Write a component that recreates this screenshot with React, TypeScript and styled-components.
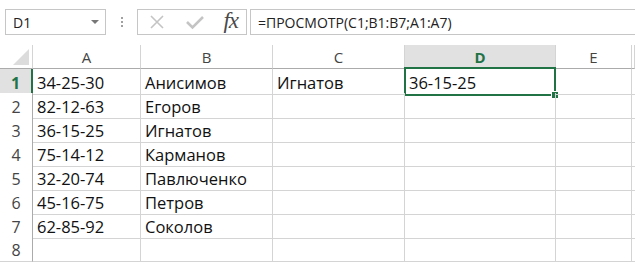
import React from 'react';
import styled, { createGlobalStyle } from 'styled-components';

const GREEN = '#217346';
const GRID = '#d4d4d4';

const GlobalStyle = createGlobalStyle`
  html, body { margin: 0; padding: 0; background: #fff; }
  body { font-family: "Open Sans", "Liberation Sans", sans-serif; }
`;

const Page = styled.div`
  width: 635px;
  height: 264px;
  overflow: hidden;
  background: #fff;
`;

const Toolbar = styled.div`
  display: flex;
  align-items: center;
  padding: 9px 0 0 5px;
  height: 26px;
  box-sizing: content-box;
  margin-bottom: 10px;
`;

const NameBox = styled.div`
  width: 101px;
  height: 26px;
  box-sizing: border-box;
  border: 1px solid #c6c6c6;
  display: flex;
  align-items: center;
  justify-content: space-between;
  padding: 0 6px 0 7px;
  font-size: 14px;
  color: #222;
`;

const Caret = styled.span`
  width: 0;
  height: 0;
  border-left: 4px solid transparent;
  border-right: 4px solid transparent;
  border-top: 4px solid #777;
`;

const Dots = styled.div`
  width: 31px;
  display: flex;
  flex-direction: column;
  align-items: center;
  gap: 2px;
  span {
    width: 2px;
    height: 2px;
    background: #a0a0a0;
  }
`;

const ButtonBox = styled.div`
  width: 110px;
  height: 26px;
  box-sizing: border-box;
  border: 1px solid #c6c6c6;
  display: flex;
  align-items: center;
  justify-content: space-between;
  padding: 0 8px 0 10px;
`;

const Fx = styled.span`
  font-family: "Liberation Serif", "DejaVu Serif", serif;
  font-style: italic;
  font-size: 23px;
  color: #4a4a4a;
  letter-spacing: -1px;
  line-height: 1;
  margin-top: -3px;
`;

const FormulaInput = styled.div`
  margin-left: 3px;
  flex: 1;
  height: 26px;
  box-sizing: border-box;
  border: 1px solid #c6c6c6;
  border-right: none;
  display: flex;
  align-items: center;
  padding-left: 7px;
  font-size: 14px;
  color: #222;
  white-space: nowrap;
`;

const Sheet = styled.div`
  display: flex;
  flex-direction: column;
`;

const Row = styled.div`
  display: grid;
  grid-template-columns: 33px 108px 132px 132px 151px 76px 1fr;
  height: 24px;
`;

const HeaderCell = styled.div<{ $active?: boolean }>`
  position: relative;
  box-sizing: border-box;
  border-right: 1px solid ${GRID};
  border-bottom: ${p => (p.$active ? `2px solid ${GREEN}` : '1px solid #ababab')};
  background: ${p => (p.$active ? '#e1e1e1' : '#fff')};
  color: ${p => (p.$active ? GREEN : '#444')};
  font-weight: ${p => (p.$active ? 700 : 400)};
  font-size: 15px;
  display: flex;
  align-items: center;
  justify-content: center;
  padding-top: ${p => (p.$active ? 1 : 0)}px;
`;

const Corner = styled.div`
  position: absolute;
  right: 3px;
  bottom: 3px;
  width: 0;
  height: 0;
  border-left: 16px solid transparent;
  border-bottom: 16px solid #dcdcdc;
`;

const RowHead = styled.div<{ $active?: boolean }>`
  box-sizing: border-box;
  border-right: ${p => (p.$active ? `2px solid ${GREEN}` : '1px solid #ababab')};
  border-bottom: 1px solid ${GRID};
  background: ${p => (p.$active ? '#e1e1e1' : '#fff')};
  color: ${p => (p.$active ? GREEN : '#444')};
  font-weight: ${p => (p.$active ? 700 : 400)};
  font-size: 16px;
  display: flex;
  align-items: center;
  justify-content: center;
  padding-top: 2px;
`;

const Cell = styled.div`
  position: relative;
  box-sizing: border-box;
  border-right: 1px solid ${GRID};
  border-bottom: 1px solid ${GRID};
  font-size: 16.5px;
  color: #111;
  display: flex;
  align-items: center;
  padding: 2px 0 0 4px;
  white-space: nowrap;
`;

const Selection = styled.div`
  position: absolute;
  left: -1px;
  top: -2px;
  right: -1px;
  bottom: -2px;
  border: 2px solid ${GREEN};
  pointer-events: none;
`;

const Handle = styled.div`
  position: absolute;
  right: -5px;
  bottom: -5px;
  width: 6px;
  height: 6px;
  background: ${GREEN};
  border: 1px solid #fff;
`;

const columns = ['A', 'B', 'C', 'D', 'E', ''];

const data: string[][] = [
  ['34-25-30', 'Анисимов', 'Игнатов', '36-15-25'],
  ['82-12-63', 'Егоров'],
  ['36-15-25', 'Игнатов'],
  ['75-14-12', 'Карманов'],
  ['32-20-74', 'Павлюченко'],
  ['45-16-75', 'Петров'],
  ['62-85-92', 'Соколов'],
  [],
];

const XIcon = () => (
  <svg width="18" height="18" viewBox="0 0 18 18">
    <path d="M3 3 L15 15 M15 3 L3 15" stroke="#c4c4c4" strokeWidth="1.6" fill="none" />
  </svg>
);

const CheckIcon = () => (
  <svg width="20" height="18" viewBox="0 0 20 18">
    <path d="M2 9 L7.5 14.5 L18 4" stroke="#c4c4c4" strokeWidth="2.6" fill="none" />
  </svg>
);

export default function App() {
  return (
    <Page>
      <GlobalStyle />
      <Toolbar>
        <NameBox>
          D1
          <Caret />
        </NameBox>
        <Dots>
          <span />
          <span />
          <span />
        </Dots>
        <ButtonBox>
          <XIcon />
          <CheckIcon />
          <Fx>fx</Fx>
        </ButtonBox>
        <FormulaInput>=ПРОСМОТР(C1;B1:B7;A1:A7)</FormulaInput>
      </Toolbar>
      <Sheet>
        <Row>
          <HeaderCell>
            <Corner />
          </HeaderCell>
          {columns.map(c => (
            <HeaderCell key={c || 'F'} $active={c === 'D'}>
              {c}
            </HeaderCell>
          ))}
        </Row>
        {data.map((row, r) => (
          <Row key={r}>
            <RowHead $active={r === 0}>{r + 1}</RowHead>
            {columns.map((c, i) => (
              <Cell key={i}>
                {row[i] || ''}
                {r === 0 && c === 'D' && (
                  <Selection>
                    <Handle />
                  </Selection>
                )}
              </Cell>
            ))}
          </Row>
        ))}
      </Sheet>
    </Page>
  );
}
